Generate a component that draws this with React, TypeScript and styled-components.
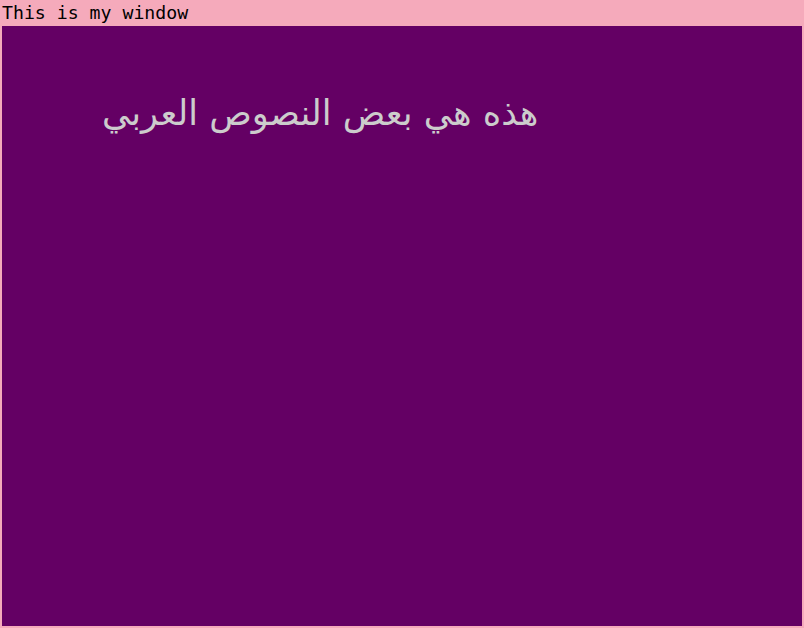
import React from "react";
import styled, { createGlobalStyle } from "styled-components";

const Global = createGlobalStyle`
  html, body { margin: 0; padding: 0; }
  body { background: #f5aabb; }
`;

const Window = styled.div`
  width: 804px;
  height: 628px;
  box-sizing: border-box;
  background: #f5aabb;
  padding: 0 2px 2px 2px;
  display: flex;
  flex-direction: column;
`;

const TitleBar = styled.div`
  height: 26px;
  font-family: "DejaVu Sans Mono", monospace;
  font-size: 18.2px;
  line-height: 25px;
  color: #000;
  white-space: nowrap;
`;

const Content = styled.div`
  flex: 1;
  background: #640064;
  padding: 69px 0 0 100px;
`;

const ArabicText = styled.div`
  font-family: "DejaVu Sans", sans-serif;
  font-size: 35.2px;
  color: #cccccc;
  direction: rtl;
  display: inline-block;
  line-height: 1;
`;

export default function App() {
  return (
    <>
      <Global />
      <Window>
        <TitleBar>This is my window</TitleBar>
        <Content>
          <ArabicText>هذه هي بعض النصوص العربي</ArabicText>
        </Content>
      </Window>
    </>
  );
}
